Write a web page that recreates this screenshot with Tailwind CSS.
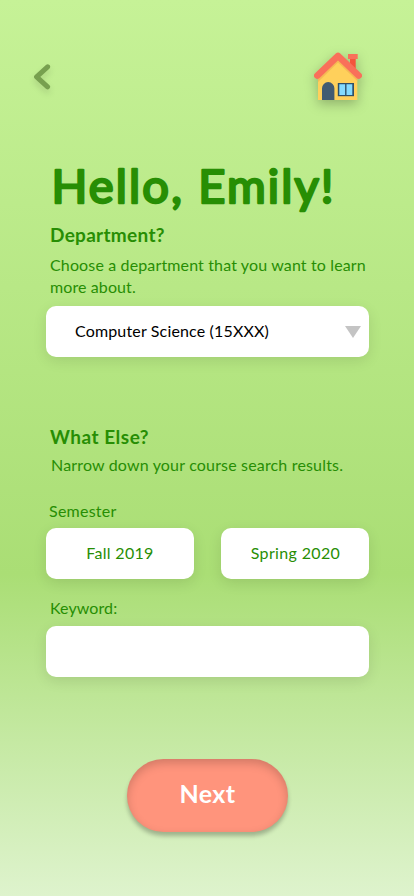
<!DOCTYPE html>
<html lang="en">
<head>
<meta charset="utf-8">
<title>Course search</title>
<script src="https://cdn.jsdelivr.net/npm/@tailwindcss/browser@4"></script>
</head>
<body class="font-[Lato,sans-serif] text-[#278e04]">
<main class="flex h-[896px] w-[414px] flex-col overflow-hidden bg-[linear-gradient(180deg,#c6f297_0%,#aade75_64%,#def3cd_100%)] pr-[45px] pl-[46px]">
  <header class="mr-px -ml-4 flex h-[157px] items-start justify-between pt-[45px]">
    <button class="mt-[13px]" aria-label="Back">
      <svg class="drop-shadow-[0_4px_3px_rgba(0,0,0,0.12)]" width="26" height="36" viewBox="0 0 26 36" fill="none" stroke="#77a04f" stroke-width="5" stroke-linecap="round" stroke-linejoin="round"><path d="M17.6 8.8 6.6 18.8 17.6 28.8"/></svg>
    </button>
    <button aria-label="Home">
      <svg class="drop-shadow-[0_4px_6px_rgba(0,0,0,0.25)]" width="60" height="60" viewBox="0 0 60 60">
        <path d="M42 13h5.700v16L42 24z" fill="#f4553d"/>
        <path d="M40 9h9.700v5H40z" fill="#f9705a"/>
        <path d="M30 12 49.300 31v24H10V31z" fill="#ffd05b"/>
        <path d="M10 33 30 14 49.300 33v3L30 17.500 10 37z" fill="#f5b955"/>
        <path d="M9.300 30.600 30 10.800 50.700 30.600" fill="none" stroke="#f9705a" stroke-width="6.500" stroke-linecap="round" stroke-linejoin="round"/>
        <path d="M14 55V43.300a6.200 6.200 0 0 1 12.400 0V55z" fill="#425b72"/>
        <path d="M29.800 38H46v13.200H29.800z" fill="#2f5068"/>
        <path d="M31.300 39.300h5.800v10.600h-5.800zM38.500 39.300h5.800v10.600h-5.800z" fill="#84dbff"/>
      </svg>
    </button>
  </header>
  <h1 class="h-[67px]">
    <svg width="323" height="67" viewBox="0 0 323 67" overflow="visible">
      <text x="5.500" y="46" textLength="282" font-weight="400" font-family="Lato, sans-serif" font-size="47" fill="#278e04" stroke="#278e04" stroke-width="2.500" stroke-linejoin="round">Hello, Emily!</text>
    </svg>
  </h1>
  <section class="h-[202px] pl-1">
    <h2 class="h-[31px] text-[19px] leading-[22px] font-bold tracking-[0.3px]">Department?</h2>
    <p class="h-[51px] text-base leading-[20px] whitespace-nowrap"><span class="block h-[22px] tracking-[0.14px]">Choose a department that you want to learn</span><span class="block tracking-[0.1px]">more about.</span></p>
    <button class="-ml-1 flex h-[51px] w-[323px] items-center justify-between rounded-[10px] bg-white pr-2 pl-[29px] text-black shadow-[0_4px_14px_rgba(0,0,0,0.1)]">
      <span class="pb-0.5 text-base tracking-[0.16px]">Computer Science (15XXX)</span>
      <svg width="16" height="12" viewBox="0 0 16 12" fill="#c4c4c4"><path d="M0 0h16L8 12z"/></svg>
    </button>
  </section>
  <section class="text-base">
    <h2 class="h-[29px] pl-1 text-[19px] leading-[21px] font-bold tracking-[0.5px]">What Else?</h2>
    <p class="h-[46px] pl-[5px] leading-[20px] tracking-[0.17px]">Narrow down your course search results.</p>
    <h3 class="h-[27px] pl-[3px] leading-[20px] tracking-[0.25px]">Semester</h3>
    <div class="flex h-[70px] items-start gap-[27px]">
      <button class="h-[51px] w-[148px] rounded-[10px] bg-white pb-0.5 tracking-[0.3px] shadow-[0_4px_14px_rgba(0,0,0,0.1)]">Fall 2019</button>
      <button class="h-[51px] w-[148px] rounded-[10px] bg-white pb-0.5 pl-px tracking-[0.35px] shadow-[0_4px_14px_rgba(0,0,0,0.1)]">Spring 2020</button>
    </div>
    <label class="block h-[28px] pl-1 leading-[20px] tracking-[0.1px]" for="keyword">Keyword:</label>
    <input id="keyword" class="block h-[51px] w-[323px] rounded-[10px] bg-white px-4 shadow-[0_4px_14px_rgba(0,0,0,0.1)]">
  </section>
  <button class="mt-[82px] ml-[81px] h-[73px] w-[161px] rounded-[37px] bg-[#ff947c] pb-1 text-[25px] font-bold tracking-[0.4px] text-white shadow-[0_4px_4px_rgba(0,0,0,0.25),inset_0_4px_10px_rgba(0,0,0,0.18)]">Next</button>
</main>
</body>
</html>
